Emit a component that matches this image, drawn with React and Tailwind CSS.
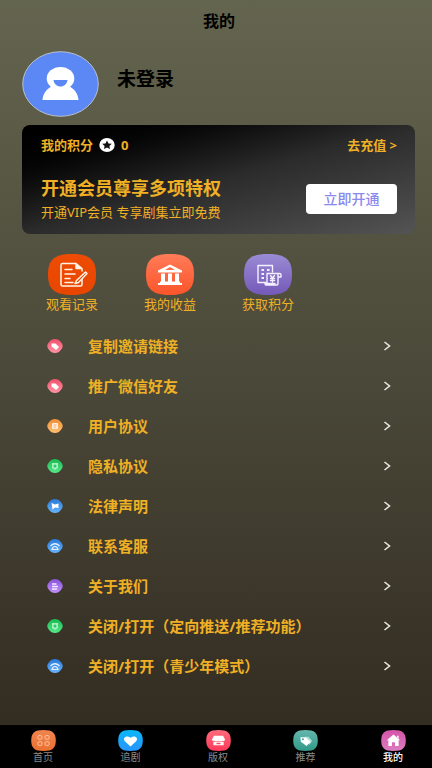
import React from "react";

function Squircle({ id, from, to }) {
  return (
    <>
      <defs>
        <linearGradient id={id} x1="0" y1="0" x2="0" y2="1">
          <stop offset="0" stopColor={from} />
          <stop offset="1" stopColor={to} />
        </linearGradient>
      </defs>
      <path
        d="M24 0 C42 0 48 6 48 20.5 C48 35 42 41 24 41 C6 41 0 35 0 20.5 C0 6 6 0 24 0 Z"
        fill={`url(#${id})`}
      />
    </>
  );
}

function HistoryIcon() {
  return (
    <svg viewBox="0 0 48 41" className="h-[41px] w-12" aria-hidden="true">
      <Squircle id="history" from="#ee4c04" to="#e84600" />
      <g fill="none" stroke="#fff3e8" strokeWidth="1.5" strokeLinecap="round" strokeLinejoin="round">
        <path d="M28 9.500H14.500Q13 9.500 13 11V30.500Q13 32 14.500 32H32.500Q34 32 34 30.500V25" />
        <path d="M34 17V14.500L28 9.500V14.500H34" fill="#fff3e8" />
        <path d="M17 15.500H24M17 20H27M17 24.500H22M17 28.500H25" />
        <path d="M37.500 18L28.500 26.500L27 29.500L30.500 28.500L39 19.500Z" fill="#e84600" />
      </g>
    </svg>
  );
}

function IncomeIcon() {
  return (
    <svg viewBox="0 0 48 41" className="h-[41px] w-12" aria-hidden="true">
      <Squircle id="income" from="#ff7c58" to="#fc542a" />
      <g fill="#fff">
        <path fillRule="evenodd" d="M24 10.500L36 16.500V18.500H12V16.500ZM24 13L19 16H29Z" />
        <path d="M15 19.500H19V28H15ZM22 19.500H26V28H22ZM29 19.500H33V28H29Z" />
        <path d="M14 27.500H34V29H36V31H12V29H14Z" />
      </g>
    </svg>
  );
}

function PointsIcon() {
  return (
    <svg viewBox="0 0 48 41" className="h-[41px] w-12" aria-hidden="true">
      <Squircle id="points" from="#9b8bd4" to="#7459b8" />
      <g fill="none" stroke="#f4f0ff" strokeWidth="1.400" strokeLinejoin="round" strokeLinecap="round">
        <path d="M22 28.500H14V11.500H28.500V18" />
        <path d="M17.500 16H20M23 16H25.500M17.500 20H20M17.500 24H20" strokeWidth="1.800" strokeLinecap="butt" />
        <path d="M23 28.500V19.500H35.500Q37 19.500 37 21V23H34M34 20V29.500Q34 31 32.500 31H22Q21 31 21 29.500H31" />
        <path d="M26.500 21.500L28.500 24L30.500 21.500M28.500 24V28M26.500 24.500H30.500M26.500 26.500H30.500" />
      </g>
    </svg>
  );
}

const GLYPHS = {
  tag: (
    <path d="M4.500 4.500H8.500L12 8L9 11L4.500 7.500Z" fill="#fff" />
  ),
  note: (
    <g>
      <rect x="5" y="4" width="6" height="6" rx="1" fill="#ffeedd" />
      <path d="M6.500 6H9.500M6.500 8H9" stroke="#f5a04c" strokeWidth="0.800" />
    </g>
  ),
  shield: (
    <g>
      <path d="M5 4H11V9L8 11L5 9Z" fill="#a4f0c0" />
      <circle cx="8" cy="7" r="1.500" fill="#2fc768" />
    </g>
  ),
  flag: (
    <path d="M4.500 4L8 5.500L11.500 4.500V9L8 8.500L5.500 10.500Z" fill="#fff" />
  ),
  phone: (
    <g fill="none" stroke="#e4f2ff" strokeWidth="1.200">
      <path d="M3.500 7Q8 2.500 12.500 7" />
      <path d="M5 10.500Q5.500 7.500 8 7.500T11 10.500Z" />
    </g>
  ),
  lines: (
    <path d="M5 5H9.500M5 7.500H11M5 10H10" stroke="#f4e8ff" strokeWidth="1.300" />
  ),
};

const ROWS = [
  { label: "复制邀请链接", glyph: "tag", from: "#f0506c", to: "#ff94a4" },
  { label: "推广微信好友", glyph: "tag", from: "#f0506c", to: "#ff94a4" },
  { label: "用户协议", glyph: "note", from: "#f08c34", to: "#ffc070" },
  { label: "隐私协议", glyph: "shield", from: "#18b850", to: "#58e888" },
  { label: "法律声明", glyph: "flag", from: "#2878d8", to: "#68b4fc" },
  { label: "联系客服", glyph: "phone", from: "#2878d8", to: "#68b4fc" },
  { label: "关于我们", glyph: "lines", from: "#8850d8", to: "#c090fc" },
  { label: "关闭/打开（定向推送/推荐功能）", glyph: "shield", from: "#18b850", to: "#58e888" },
  { label: "关闭/打开（青少年模式）", glyph: "phone", from: "#2878d8", to: "#68b4fc" },
];

function RowIcon({ id, glyph, from, to }) {
  return (
    <svg viewBox="0 0 16 14" className="h-[14px] w-4 shrink-0" aria-hidden="true">
      <defs>
        <linearGradient id={id} x1="0" y1="0" x2="0" y2="1">
          <stop offset="0" stopColor={from} />
          <stop offset="1" stopColor={to} />
        </linearGradient>
      </defs>
      <path
        d="M8 0C10.500 0 12.500 1.200 13.800 3C15 4.500 15.700 5.600 15.700 7C15.700 8.400 15 9.500 13.800 11C12.500 12.800 10.500 14 8 14C5.500 14 3.500 12.800 2.200 11C1 9.500 0.300 8.400 0.300 7C0.300 5.600 1 4.500 2.200 3C3.500 1.200 5.500 0 8 0Z"
        fill={`url(#${id})`}
      />
      {GLYPHS[glyph]}
    </svg>
  );
}

const TABS = [
  {
    label: "首页",
    from: "#f08450",
    to: "#ec7030",
    art: (
      <g fill="none" stroke="#ffc8a4" strokeWidth="1.800">
        <rect x="13" y="11" width="8" height="7" rx="2" />
        <rect x="27" y="11" width="8" height="7" rx="2" />
        <rect x="13" y="23" width="8" height="7" rx="2" />
        <rect x="27" y="23" width="8" height="7" rx="2" />
      </g>
    ),
  },
  {
    label: "追剧",
    from: "#08b8fc",
    to: "#2894fc",
    art: <path d="M24 32L13 22C8 16 15 9 24 15C33 9 40 16 35 22Z" fill="#fff" />,
  },
  {
    label: "版权",
    from: "#ff6c7c",
    to: "#fc3858",
    art: (
      <g fill="#fff">
        <path d="M15 11H33L37 19Q36 22 32 21Q28 23 24 21Q20 23 16 21Q12 22 11 19Z" />
        <path d="M14 23H34V30H14ZM20 25V28H28V25Z" fillRule="evenodd" />
      </g>
    ),
  },
  {
    label: "推荐",
    from: "#64b8ac",
    to: "#309888",
    art: (
      <g>
        <path d="M22 13L30 13L37 21L32 29Z" fill="#a8dcd4" />
        <path d="M14 14L24 14L34 23L26 31L15 23Z" fill="#fff" />
        <circle cx="19" cy="18" r="2" fill="#40a496" />
      </g>
    ),
  },
  {
    label: "我的",
    from: "#d454a8",
    to: "#dc7cc0",
    art: (
      <g>
        <path d="M24 9L37 20H34V31H27V24H21V31H14V20H11Z" fill="#fff" />
        <path d="M31 11H34V17L31 14Z" fill="#fff" />
      </g>
    ),
    active: true,
  },
];

const SHORTCUTS = [
  { label: "观看记录", Icon: HistoryIcon },
  { label: "我的收益", Icon: IncomeIcon },
  { label: "获取积分", Icon: PointsIcon },
];

export default function App() {
  return (
    <div className="flex min-h-screen flex-col bg-linear-to-b from-[#64654f] via-[#4a4838] to-[#30291f] font-['Noto_Sans','Noto_Sans_CJK_SC',sans-serif] text-[#efb025]">
      <header className="flex h-[42px] items-center justify-center pl-1.5">
        <h1 className="text-base font-bold leading-6 text-black">我的</h1>
      </header>

      <main className="flex flex-1 flex-col">
        <section className="flex items-start gap-[18px] px-[22px] pt-[9px]">
          <svg viewBox="0 0 77 66" className="h-[66px] w-[77px]" role="img" aria-label="头像">
            <ellipse cx="38.500" cy="33" rx="37.800" ry="32.300" fill="#5b88f5" stroke="#b9c0cf" />
            <ellipse cx="38.500" cy="27.500" rx="13.800" ry="11.500" fill="#fff" />
            <path d="M20.500 49C21 42 25 37.500 30 35.500L33 36.500H44L47 35.500C52 37.500 56 42 56.500 49Z" fill="#fff" />
            <path d="M31.500 29H45.500C45 33 42 35.500 38.500 35.500S32 33 31.500 29Z" fill="#5b88f5" />
          </svg>
          <p className="pt-3.5 text-[19px] font-bold leading-7 text-black">未登录</p>
        </section>

        <section className="ml-[22px] mr-[17px] mt-2 flex flex-col rounded-lg bg-linear-to-br from-black via-[#2b2b2b] to-[#545454] pb-[11px] pl-[19px] pr-[18px] pt-2.5">
          <div className="flex items-center justify-between text-[13px] font-bold leading-5">
            <p className="flex items-center gap-1.5">
              <span>我的积分</span>
              <svg viewBox="0 0 16 14" className="h-[14px] w-4" aria-hidden="true">
                <ellipse cx="8" cy="7" rx="7.700" ry="7" fill="#fff" />
                <path d="M8 2.500L9.500 5.400L12.800 5.800L10.400 7.900L11 11L8 9.500L5 11L5.600 7.900L3.200 5.800L6.500 5.400Z" fill="#111" />
              </svg>
              <span>0</span>
            </p>
            <a href="#recharge">去充值 &gt;</a>
          </div>
          <div className="flex items-center justify-between pt-5">
            <div>
              <h2 className="text-lg font-bold leading-[26px]">开通会员尊享多项特权</h2>
              <p className="text-[13px] leading-[22px]">开通VIP会员 专享剧集立即免费</p>
            </div>
            <button type="button" className="h-[30px] w-[91px] rounded-sm bg-white text-sm font-medium text-[#8b88ee]">
              立即开通
            </button>
          </div>
        </section>

        <section className="flex gap-[42px] px-11 pt-5">
          {SHORTCUTS.map(({ label, Icon }) => (
            <button key={label} type="button" className="flex w-14 flex-col items-center text-[13px] leading-[18px]">
              <Icon />
              <span>{label}</span>
            </button>
          ))}
        </section>

        <ul className="pt-[13px]">
          {ROWS.map((row, i) => (
            <li key={row.label}>
              <button
                type="button"
                className="flex h-10 w-full items-center pl-[47px] pr-[41px] text-left text-[15px] font-bold"
              >
                <RowIcon id={`row${i}`} glyph={row.glyph} from={row.from} to={row.to} />
                <span className="flex-1 pl-[25px]">{row.label}</span>
                <svg viewBox="0 0 8 10" className="h-2.5 w-2" aria-hidden="true">
                  <path d="M1.500 1L6.500 5L1.500 9" fill="none" stroke="#e8e6df" strokeWidth="1.600" />
                </svg>
              </button>
            </li>
          ))}
        </ul>
      </main>

      <nav className="sticky bottom-0 flex h-[43px] justify-between bg-black pl-[30px] pr-[26px] pt-[5px]">
        {TABS.map((tab) => (
          <a
            key={tab.label}
            href={`#${tab.label}`}
            className={`flex w-[26px] flex-col items-center text-[10px] leading-3 ${
              tab.active ? "font-medium text-white" : "text-[#8a8a8a]"
            }`}
          >
            <svg viewBox="0 0 48 41" className="h-[21px] w-[25px]" aria-hidden="true">
              <Squircle id={`tab-${tab.label}`} from={tab.from} to={tab.to} />
              {tab.art}
            </svg>
            <span>{tab.label}</span>
          </a>
        ))}
      </nav>
    </div>
  );
}
